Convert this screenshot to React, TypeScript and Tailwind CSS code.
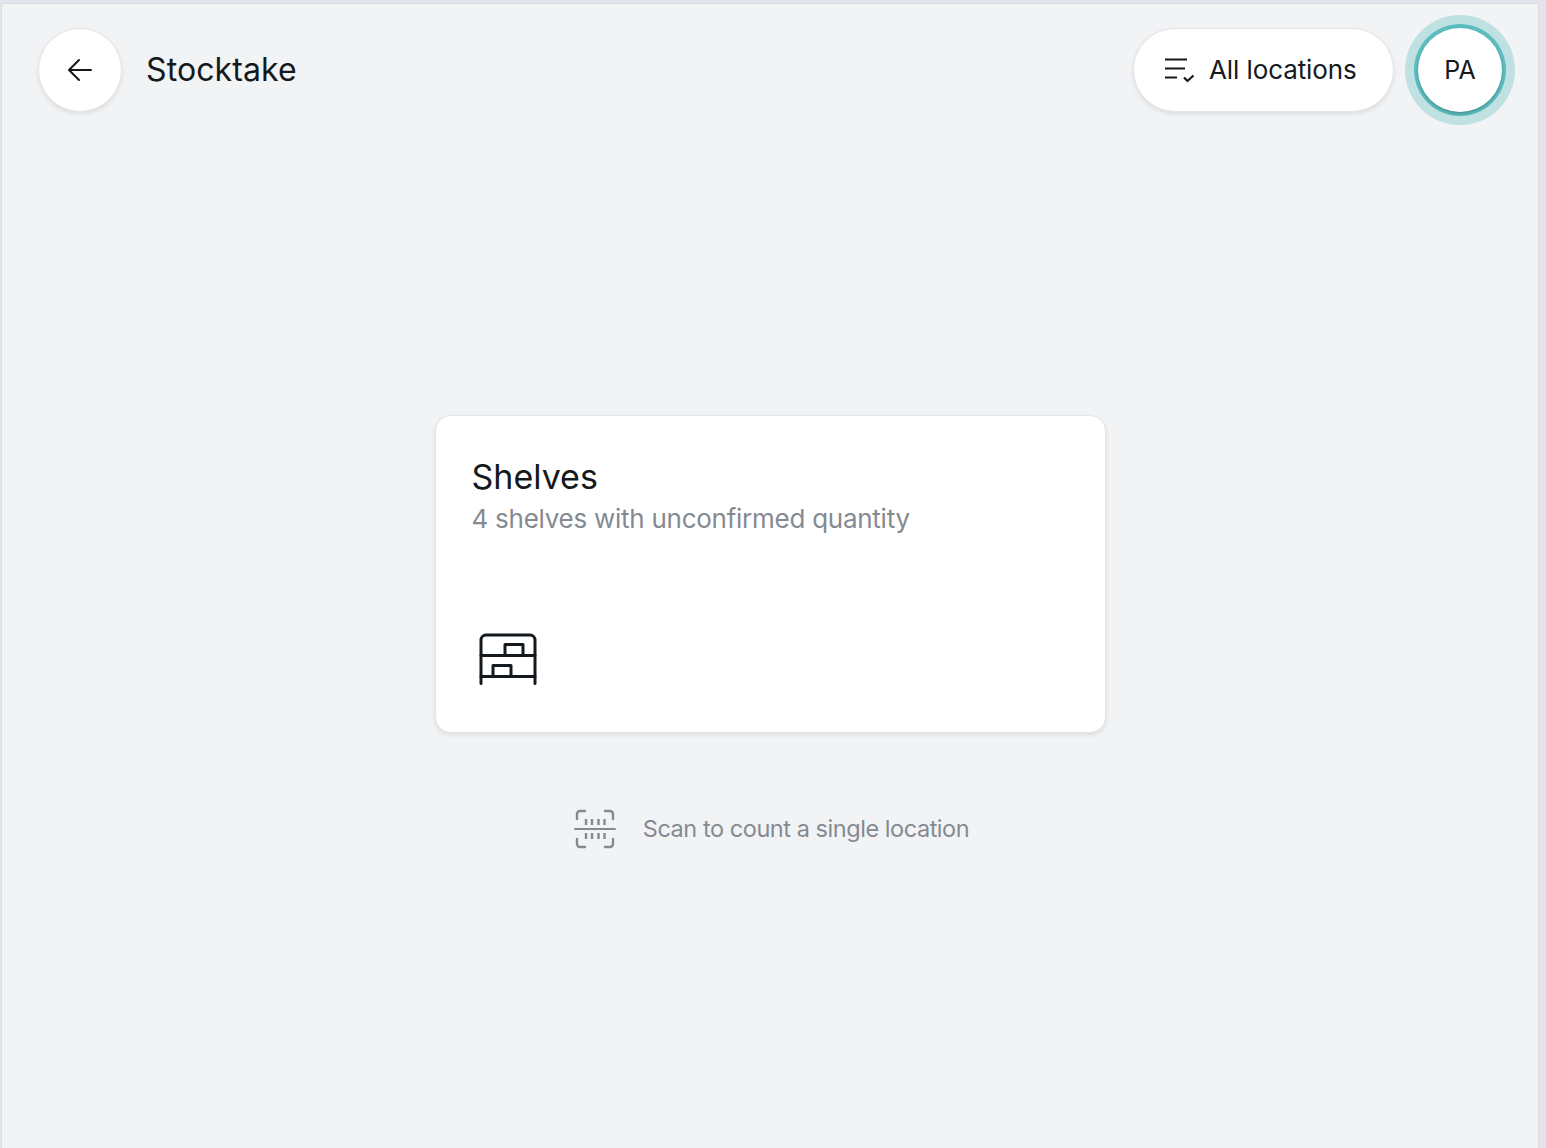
const font = "font-['Inter',sans-serif]";

function ArrowIcon() {
  return (
    <svg width="28" height="28" viewBox="0 0 28 28" fill="none" stroke="#14191e" strokeWidth="2" strokeLinecap="round" strokeLinejoin="round">
      <path d="M25 14H3M13 4 3 14l10 10" />
    </svg>
  );
}

function ListCheckIcon() {
  return (
    <svg width="32" height="26" viewBox="0 0 32 26" fill="none" stroke="#14191e" strokeWidth="2.200" strokeLinecap="butt" strokeLinejoin="round">
      <path d="M1 2.500H23M1 11.500H21M1 20.500H13" />
      <path d="M20 20.500 23.500 24l6-5.500" />
    </svg>
  );
}

function ShelfIcon() {
  return (
    <svg width="58" height="52" viewBox="0 0 58 52" fill="none" stroke="#14191e" strokeWidth="3" strokeLinecap="round" strokeLinejoin="round">
      <path d="M2 50.500V7a5 5 0 0 1 5-5h44a5 5 0 0 1 5 5v43.500" />
      <path d="M2 22.500H56M2 43.500H56" />
      <path d="M26 22.500V11.500H44V22.500" />
      <path d="M14 43.500V32.500H32V43.500" />
    </svg>
  );
}

function ScanIcon() {
  return (
    <svg width="42" height="42" viewBox="0 0 42 42" fill="none" stroke="#858a92" strokeWidth="2.400" strokeLinecap="round" strokeLinejoin="round">
      <path d="M11 3H6a3 3 0 0 0-3 3v5M31 3h5a3 3 0 0 1 3 3v5M11 39H6a3 3 0 0 1-3-3v-5M31 39h5a3 3 0 0 0 3-3v-5" />
      <path d="M1 21H41" strokeWidth="2" />
      <path strokeLinecap="butt" d="M12 11v6M18 11v6M24.500 11v6M30.500 11v6M12 25v6M18 25v6M24.500 25v6M30.500 25v6" />
    </svg>
  );
}

export default function App() {
  return (
    <div className={`${font} h-[1148px] w-[1546px] overflow-hidden bg-[#e2e3ed] pl-px pr-[7px] pt-[3px]`}>
      <div className="flex h-full flex-col border-l border-r border-t border-[#d9dbdf] bg-[#f2f3f5]">
        <header className="flex items-start justify-between pl-[36px] pr-[23px] pt-[11px]">
          <div className="mt-[13px] flex items-center gap-[24px]">
            <button className="flex h-[84px] w-[84px] items-center justify-center rounded-full border border-[#e4e5e8] bg-white shadow-[0_2px_4px_rgba(20,25,30,0.1)]">
              <ArrowIcon />
            </button>
            <h1 className="text-[32px] font-normal leading-none tracking-[0.1px] text-[#14191e]">Stocktake</h1>
          </div>
          <div className="flex items-start gap-[11px]">
            <button className="mt-[13px] flex h-[84px] w-[261px] items-center gap-[13px] rounded-full border border-[#e4e5e8] bg-white pl-[30px] shadow-[0_2px_4px_rgba(20,25,30,0.1)]">
              <ListCheckIcon />
              <span className="text-[26px] leading-none tracking-[-0.1px] text-[#14191e]">All locations</span>
            </button>
            <div className="flex h-[110px] w-[110px] items-center justify-center rounded-full bg-[#bfe1e2]">
              <div className="flex h-[92px] w-[92px] items-center justify-center rounded-full bg-[#5cbdbf]">
                <div className="flex h-[84px] w-[84px] items-center justify-center rounded-full bg-white pt-px text-[25px] text-[#14191e] shadow-[0_2px_3px_rgba(20,25,30,0.25)]">PA</div>
              </div>
            </div>
          </div>
        </header>
        <main className="flex flex-col items-center pt-[290px]">
          <section className="h-[318px] w-[671px] rounded-[16px] border border-[#e4e5e8] bg-white pl-[36px] pt-[38px] shadow-[0_2px_4px_rgba(20,25,30,0.1)]">
            <h2 className="text-[34px] font-normal leading-[46px] text-[#14191e]">Shelves</h2>
            <p className="mt-[1px] text-[26px] leading-[36px] tracking-[-0.26px] text-[#858a92]">4 shelves with unconfirmed quantity</p>
            <div className="mt-[96px] pl-[7px]"><ShelfIcon /></div>
          </section>
          <div className="mt-[75px] ml-[3px] flex items-center gap-[27px]">
            <ScanIcon />
            <span className="text-[23.500px] leading-none tracking-[-0.45px] text-[#858a92]">Scan to count a single location</span>
          </div>
        </main>
      </div>
    </div>
  );
}
